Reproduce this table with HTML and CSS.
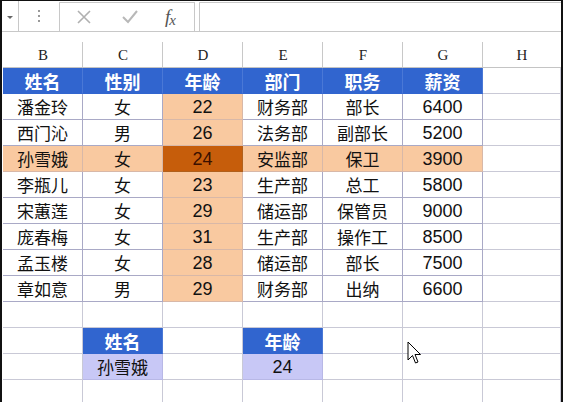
FILE: index.html
```html
<!DOCTYPE html>
<html lang="zh">
<head>
<meta charset="utf-8">
<link rel="stylesheet" href="styles.css">
</head>
<body>
<div class="frame">
  <div class="toolbar">
    <div class="namebox"><span class="tri"></span></div>
    <div class="grip"><span></span><span></span><span></span></div>
    <div class="btns">
      <svg class="ic" width="16" height="16" viewBox="0 0 16 16"><path d="M2 2 L14 14 M14 2 L2 14" stroke="#b0b0b0" stroke-width="1.6" fill="none"/></svg>
      <svg class="ic" width="18" height="16" viewBox="0 0 18 16"><path d="M2 8 L7 13 L16 2" stroke="#b8b8b8" stroke-width="2" fill="none"/></svg>
      <span class="fx"><i>f</i><i class="x">x</i></span>
    </div>
    <div class="input"></div>
  </div>
  <div class="colhead">
    <div>B</div><div>C</div><div>D</div><div>E</div><div>F</div><div>G</div><div class="last">H</div>
  </div>
  <div class="sheet">
    <div class="c th">姓名</div><div class="c th">性别</div><div class="c th">年龄</div><div class="c th">部门</div><div class="c th">职务</div><div class="c th">薪资</div><div class="c e"></div>

    <div class="c t">潘金玲</div><div class="c t">女</div><div class="c t n pe">22</div><div class="c t">财务部</div><div class="c t">部长</div><div class="c t n">6400</div><div class="c e"></div>
    <div class="c t">西门沁</div><div class="c t">男</div><div class="c t n pe">26</div><div class="c t">法务部</div><div class="c t">副部长</div><div class="c t n">5200</div><div class="c e"></div>
    <div class="c t pe">孙雪娥</div><div class="c t pe">女</div><div class="c t n dk">24</div><div class="c t pe">安监部</div><div class="c t pe">保卫</div><div class="c t n pe">3900</div><div class="c e"></div>
    <div class="c t">李瓶儿</div><div class="c t">女</div><div class="c t n pe">23</div><div class="c t">生产部</div><div class="c t">总工</div><div class="c t n">5800</div><div class="c e"></div>
    <div class="c t">宋蕙莲</div><div class="c t">女</div><div class="c t n pe">29</div><div class="c t">储运部</div><div class="c t">保管员</div><div class="c t n">9000</div><div class="c e"></div>
    <div class="c t">庞春梅</div><div class="c t">女</div><div class="c t n pe">31</div><div class="c t">生产部</div><div class="c t">操作工</div><div class="c t n">8500</div><div class="c e"></div>
    <div class="c t">孟玉楼</div><div class="c t">女</div><div class="c t n pe">28</div><div class="c t">储运部</div><div class="c t">部长</div><div class="c t n">7500</div><div class="c e"></div>
    <div class="c t">章如意</div><div class="c t">男</div><div class="c t n pe">29</div><div class="c t">财务部</div><div class="c t">出纳</div><div class="c t n">6600</div><div class="c e"></div>

    <div class="c e"></div><div class="c e"></div><div class="c e"></div><div class="c e"></div><div class="c e"></div><div class="c e"></div><div class="c e"></div>
    <div class="c e"></div><div class="c th">姓名</div><div class="c e"></div><div class="c th">年龄</div><div class="c e"></div><div class="c e"></div><div class="c e"></div>
    <div class="c e"></div><div class="c lv">孙雪娥</div><div class="c e"></div><div class="c lv n">24</div><div class="c e"></div><div class="c e"></div><div class="c e"></div>
    <div class="c e"></div><div class="c e"></div><div class="c e"></div><div class="c e"></div><div class="c e"></div><div class="c e"></div><div class="c e"></div>
  </div>
  <svg class="cursor" width="15" height="24" viewBox="0 0 15 24"><path d="M1 1 L1 19 L5.5 14.5 L8.5 22 L11 21 L8 13.5 L13.5 13.5 Z" fill="#fff" stroke="#000" stroke-width="1"/></svg>
</div>
</body>
</html>
```

FILE: styles.css
```css
* { box-sizing: border-box; }
html, body { margin: 0; padding: 0; background: #fff; }
body { width: 563px; height: 402px; overflow: hidden; }
.frame {
  position: relative;
  width: 563px;
  height: 402px;
  border-left: 2px solid #111;
  border-right: 2px solid #111;
  border-top: 1px solid #111;
  padding-left: 1px;
  overflow: hidden;
}
.toolbar {
  display: flex;
  height: 31px;
  margin-left: -1px;
  border-bottom: 1px solid #c8c8c8;
}
.namebox {
  width: 17px;
  height: 30px;
  border-right: 1px solid #c8c8c8;
  display: flex;
  align-items: center;
  justify-content: center;
}
.tri {
  width: 0; height: 0;
  border-left: 3px solid transparent;
  border-right: 3px solid transparent;
  border-top: 3px solid #666;
  margin-top: 2px;
}
.grip {
  width: 40px;
  display: flex;
  flex-direction: column;
  align-items: center;
  justify-content: center;
  gap: 3px;
}
.grip span { width: 2px; height: 2px; background: #999; }
.btns {
  width: 136px;
  height: 30px;
  margin-top: 1px;
  border: 1px solid #c8c8c8;
  display: flex;
  align-items: center;
  padding-left: 16px;
  gap: 29px;
}
.fx {
  font-family: "Liberation Serif", serif;
  font-size: 19px;
  color: #555;
  margin-left: -3px;
  letter-spacing: -1px;
}
.fx .x { font-size: 15px; position: relative; top: 2px; }
.input {
  flex: 1;
  height: 30px;
  margin-top: 1px;
  margin-left: 4px;
  border-top: 1px solid #c8c8c8;
  border-left: 1px solid #c8c8c8;
}
.colhead {
  display: grid;
  grid-template-columns: repeat(6, 80px) 78px;
  height: 36px;
  border-bottom: 1px solid #c4c4c4;
}
.colhead div {
  font-family: "Liberation Serif", serif;
  font-size: 15px;
  line-height: 1;
  color: #222;
  display: flex;
  align-items: flex-end;
  justify-content: center;
  padding-bottom: 4px;
  position: relative;
}
.colhead div::after {
  content: "";
  position: absolute;
  right: 0;
  top: 10px;
  bottom: 0;
  width: 1px;
  background: #c8c8c8;
}
.colhead div.last::after { display: none; }
.sheet {
  display: grid;
  grid-template-columns: repeat(6, 80px) 78px;
  grid-auto-rows: 26px;
}
.c {
  border-right: 1px solid #c9c9d6;
  border-bottom: 1px solid #c9c9d6;
  display: flex;
  align-items: center;
  justify-content: center;
  font-family: "Noto Sans CJK SC", sans-serif;
  font-size: 17px;
  color: #111;
  line-height: 1;
}
.c.t { border-color: #a9a9c6; }
.c.n { font-family: "Liberation Sans", Arial, sans-serif; font-size: 18px; }
.th {
  background: #3165cf;
  color: #fff;
  font-weight: bold;
  font-size: 18px;
  border-color: #3165cf;
  border-right-color: #4a78d6;
}
.pe { background: #f9c9a0; border-color: #e9c2a8 #b9b1c2 #b9b1c2 #e9c2a8; }
.c.pe { border-right-color: #d8b8a8; border-bottom-color: #d8b8a8; }
.c.dk { background: #c65d0b; color: #3a1000; border-color: #b0601c; }
.lv { background: #c8c8f6; border-color: #b8b8e6; }
.cursor {
  position: absolute;
  left: 405px;
  top: 340px;
}
```
